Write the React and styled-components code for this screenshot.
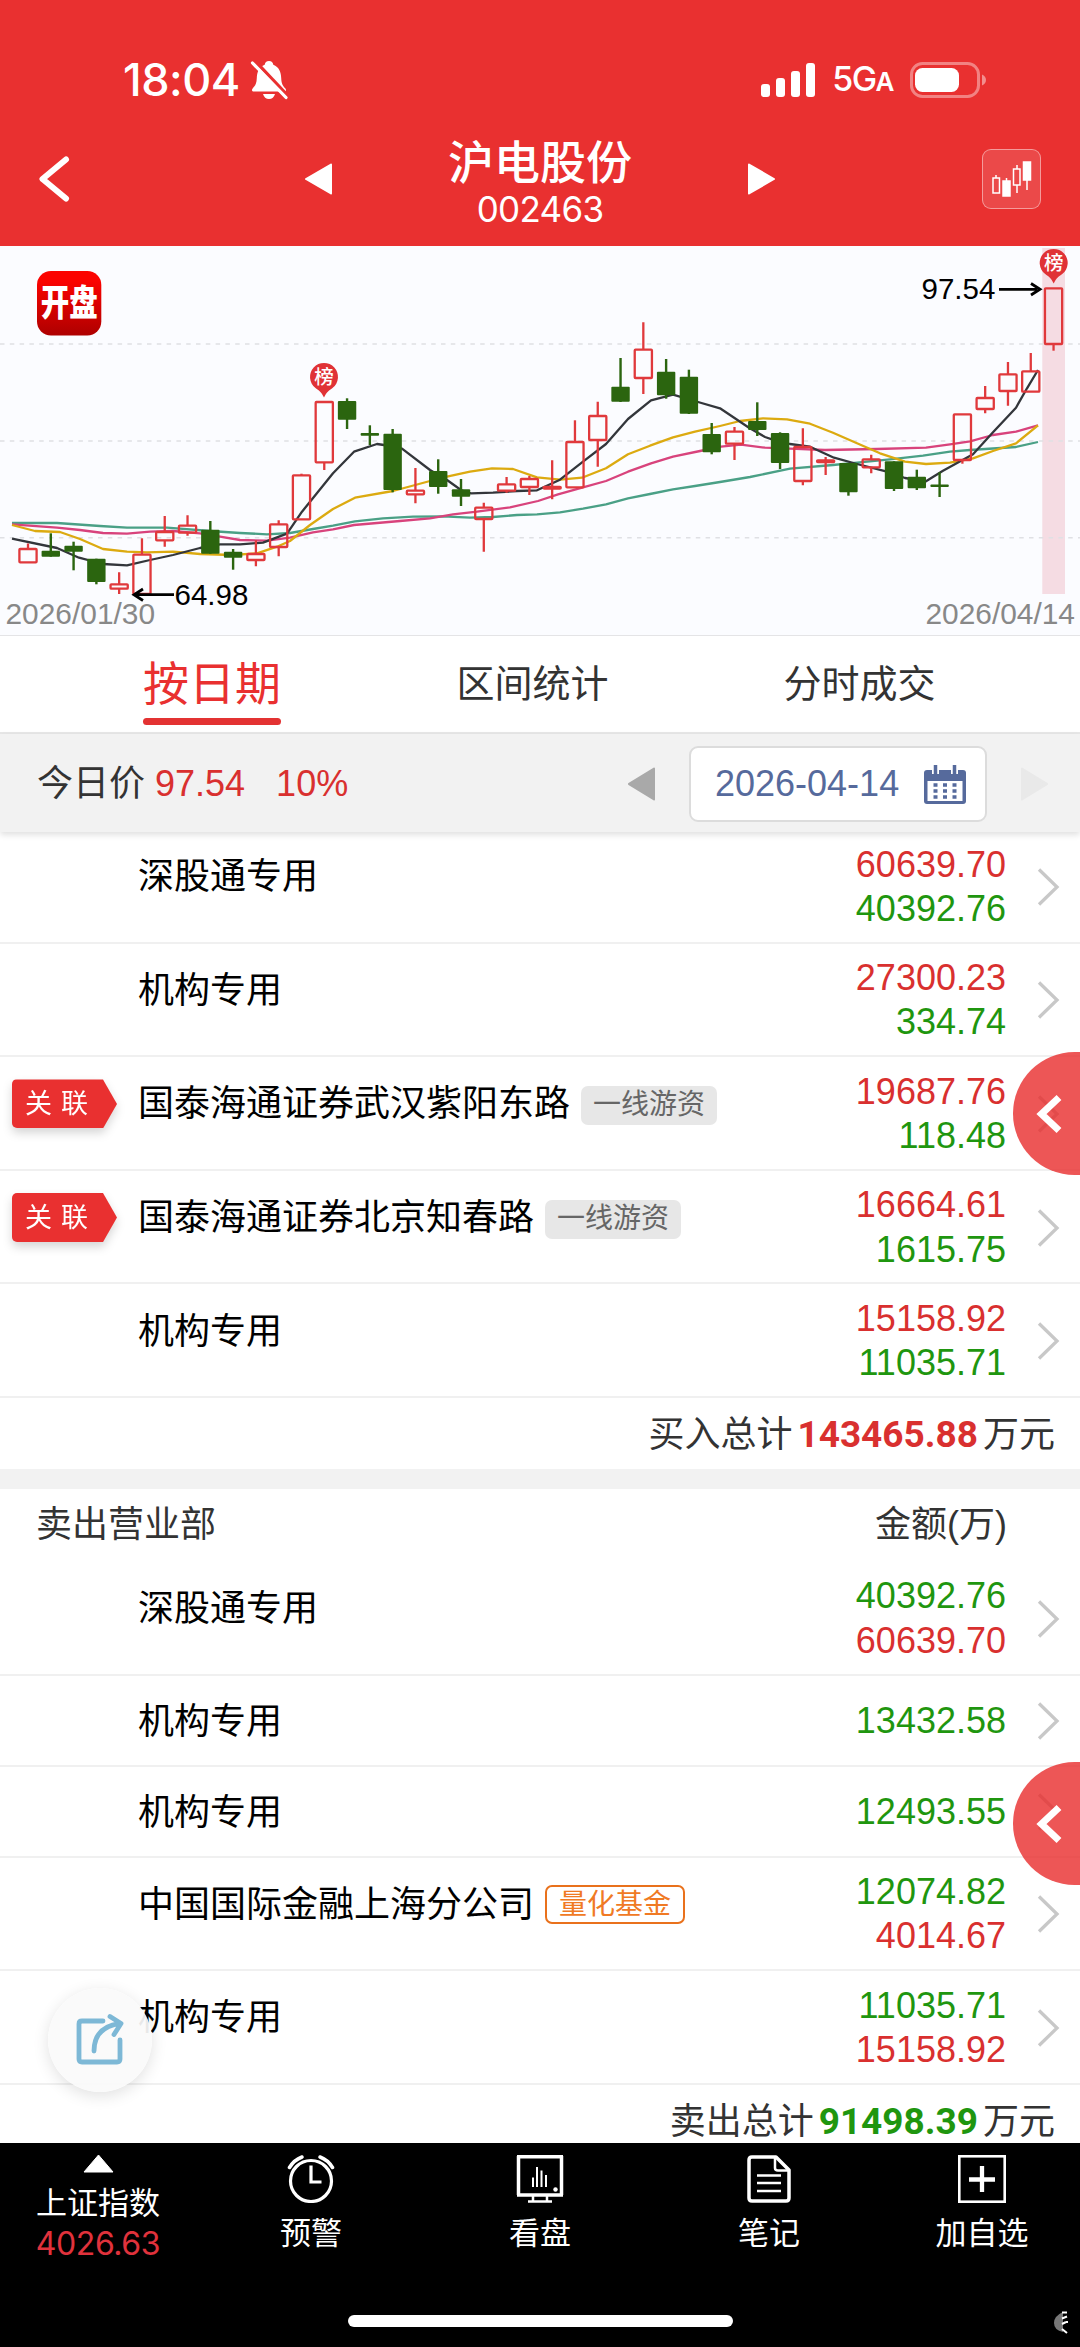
import styled, { createGlobalStyle, css } from 'styled-components';

const RED = '#e93030';
const UP = '#d9302f';
const DOWN = '#1f960f';

const GlobalStyle = createGlobalStyle`
  * {
    box-sizing: border-box;
  }
  body {
    margin: 0;
    background: #fff;
    font-family: 'Liberation Sans', 'Noto Sans CJK SC', sans-serif;
  }
  svg {
    display: block;
    flex-shrink: 0;
  }
`;

const Screen = styled.div`
    position: relative;
    display: flex;
    flex-direction: column;
    width: 1080px;
    height: 2347px;
    overflow: hidden;
    background: #fff;
`;

/* ---------- header ---------- */

const Header = styled.header`
    height: 246px;
    background: ${RED};
    color: #fff;
`;

const StatusBar = styled.div`
    display: flex;
    align-items: center;
    justify-content: space-between;
    height: 108px;
    padding: 52px 94px 0 123px;
`;

const StatusGroup = styled.div`
    display: flex;
    align-items: center;
    gap: ${({ $gap }) => $gap}px;
`;

const Clock = styled.span`
    font: 500 45px/56px Inter, sans-serif;
    letter-spacing: -0.5px;
`;

const Network = styled.span`
    font: 500 34px/56px Inter, sans-serif;
    letter-spacing: -1.5px;
    small {
        font-size: 26px;
        font-weight: 600;
    }
`;

const TitleBar = styled.div`
    display: grid;
    grid-template-columns: 305px 1fr 305px;
    align-items: center;
    height: 138px;
    padding-top: 3px;
`;

const BackCell = styled.div`
    padding-left: 36px;
`;

const ChartCell = styled.div`
    display: flex;
    justify-content: flex-end;
    padding-right: 39px;
`;

const StockSwitch = styled.div`
    display: flex;
    align-items: center;
    justify-content: space-between;
`;

const StockTitle = styled.div`
    display: flex;
    flex-direction: column;
    align-items: center;
    padding-top: 9px;
`;

const StockName = styled.h1`
    margin: 0;
    font-size: 46px;
    font-weight: 500;
    line-height: 51px;
`;

const StockCode = styled.span`
    font: 400 35px/40px Inter, sans-serif;
    letter-spacing: -0.7px;
`;

const ChartButton = styled.button`
    display: flex;
    align-items: center;
    justify-content: center;
    width: 59px;
    height: 60px;
    padding: 0;
    border: 1.5px solid rgba(255, 255, 255, 0.45);
    border-radius: 9px;
    background: rgba(255, 255, 255, 0.12);
`;

/* ---------- chart ---------- */

const ChartPanel = styled.section`
    height: 390px;
    background: #fbfcff;
    border-bottom: 1px solid #e4e4e6;
`;

/* ---------- tabs & date bar ---------- */

const Tabs = styled.nav`
    display: grid;
    grid-template-columns: 372px 269px 385px;
    justify-content: start;
    height: 98px;
    padding-left: 26px;
    border-bottom: 2px solid #e7e7e7;
`;

const Tab = styled.div`
    display: flex;
    flex-direction: column;
    align-items: center;
    padding-top: 18px;
    color: #333;
    font-size: 38px;
    line-height: 60px;

    ${({ $active }) => $active && css`
        color: ${RED};
        font-size: 46px;
        &::after {
            content: '';
            width: 138px;
            height: 7px;
            margin-top: 4px;
            border-radius: 4px;
            background: #e33232;
        }
    `}
`;

const DateBar = styled.div`
    position: relative;
    z-index: 2;
    display: flex;
    align-items: center;
    height: 98px;
    padding: 2px 32px 0 37px;
    background: #f2f2f2;
    box-shadow: 0 3px 6px rgba(0, 0, 0, 0.12);
    font-size: 36px;
    line-height: 50px;
    color: #333;
`;

const Price = styled.span`
    margin-left: ${({ $gap }) => $gap}px;
    color: ${UP};
`;

const DatePicker = styled.div`
    display: flex;
    align-items: center;
    gap: 34px;
    margin-left: auto;
`;

const DateBox = styled.div`
    display: flex;
    align-items: center;
    justify-content: space-between;
    width: 298px;
    height: 76px;
    padding: 0 19px 0 24px;
    border: 2px solid #dcdcdc;
    border-radius: 9px;
    background: #fff;
    color: #566a9c;
`;

/* ---------- list ---------- */

const Content = styled.main`
    flex: 1;
    min-height: 0;
    margin-top: -2px;
    overflow: hidden;
`;

const Row = styled.div`
    display: flex;
    align-items: center;
    height: ${({ $single }) => ($single ? 91 : 113.6)}px;
    padding: 2px 20px 0 0;
    border-bottom: 2px solid #f0f0f0;
`;

const RelationCell = styled.div`
    width: 138px;
    padding-left: 12px;
    margin-bottom: ${({ $single }) => ($single ? 0 : 20)}px;
`;

const RelationTag = styled.div`
    filter: drop-shadow(0 5px 5px rgba(0, 0, 0, 0.16));
    width: 105px;
    span {
        display: block;
        height: 49px;
        padding-left: 13px;
        border-radius: 5px 0 0 5px;
        background: ${RED};
        clip-path: polygon(0 0, 91px 0, 100% 50%, 91px 100%, 0 100%);
        color: #fff;
        font-size: 27px;
        line-height: 51px;
        letter-spacing: 9px;
        white-space: nowrap;
    }
`;

const Branch = styled.div`
    display: flex;
    align-items: center;
    flex: 1;
    gap: 11px;
    margin-bottom: ${({ $single }) => ($single ? -1 : 19)}px;
    color: #000;
    font-size: 36px;
    line-height: 50px;
    white-space: nowrap;
`;

const Label = styled.span`
    height: 39px;
    padding: 0 12px;
    border-radius: 7px;
    background: #e7e7e7;
    color: #666;
    font-size: 28px;
    line-height: 38px;
    margin-top: 2px;

    ${({ $outline }) => $outline && css`
        border: 2px solid #e9711c;
        background: #fff;
        color: #f07a24;
        line-height: 36px;
        margin-top: 0;
    `}
`;

const Amounts = styled.div`
    display: flex;
    flex-direction: column;
    align-items: flex-end;
    margin-right: 31px;
    font-size: 36px;
    line-height: 44.3px;
`;

const Amount = styled.span`
    color: ${({ $up }) => ($up ? UP : DOWN)};
`;

const Total = styled.div`
    display: flex;
    align-items: center;
    justify-content: flex-end;
    height: 71px;
    padding: 4px 25px 0 0;
    color: #333;
    font-size: 36px;
    line-height: 50px;
    b {
        margin: 0 5px;
        color: ${({ $up }) => ($up ? UP : DOWN)};
        font: 700 37px/50px Roboto, sans-serif;
    }
`;

const Divider = styled.div`
    height: 20px;
    background: #f2f2f2;
`;

const SellHeader = styled.div`
    display: flex;
    justify-content: space-between;
    align-items: center;
    height: 73px;
    padding: 0 73px 1px 36px;
    color: #333;
    font-size: 36px;
    line-height: 50px;
`;

/* ---------- floating buttons ---------- */

const SideHandle = styled.button`
    position: absolute;
    z-index: 3;
    top: ${({ $top }) => $top}px;
    right: 0;
    display: flex;
    align-items: center;
    width: 67px;
    height: 123px;
    padding: 0 0 0 21px;
    border: 0;
    border-radius: 62px 0 0 62px / 62px 0 0 62px;
    background: rgba(232, 44, 44, 0.8);
`;

const ShareButton = styled.button`
    position: absolute;
    z-index: 3;
    top: 1988px;
    left: 48px;
    display: flex;
    align-items: center;
    justify-content: center;
    width: 104px;
    height: 104px;
    padding: 0;
    border: 0;
    border-radius: 50%;
    background: rgba(250, 250, 250, 0.93);
    box-shadow: 0 4px 16px rgba(0, 0, 0, 0.12);
`;

/* ---------- bottom bar ---------- */

const BottomBar = styled.footer`
    position: relative;
    display: grid;
    grid-template-columns: 196px 230px 228px 230px 196px;
    align-content: start;
    height: 204px;
    background: #000;
    color: #fff;
    font-size: 31px;
    line-height: 40px;
`;

const NavItem = styled.div`
    display: flex;
    flex-direction: column;
    align-items: center;
    padding-top: 12px;
    gap: 11px;
`;

const IndexItem = styled(NavItem)`
    padding-top: 11px;
    gap: 0;
    svg {
        margin-bottom: 11px;
    }
`;

const IndexValue = styled.span`
    color: #e0323c;
    font: 400 32px/40px Inter, sans-serif;
    letter-spacing: -0.4px;
`;

const HomeIndicator = styled.div`
    position: absolute;
    left: 348px;
    bottom: 20px;
    width: 385px;
    height: 12px;
    border-radius: 6px;
    background: #fff;
`;

const CornerMark = styled.svg`
    position: absolute;
    right: 11px;
    bottom: 12px;
`;

/* ---------- data ---------- */

// [direction, high, body top, body bottom, low]
const candles = [
    ['u', 543.5, 549, 562.3, 562.3],
    ['d', 533.3, 550.7, 556.7, 556.7],
    ['d', 541.7, 545.7, 551.7, 570.3],
    ['d', 558.7, 558.7, 582, 584.3],
    ['u', 572.3, 584.3, 588.7, 594],
    ['u', 538.3, 554.7, 594, 594],
    ['u', 516, 532, 540.3, 546.7],
    ['u', 515.3, 525.7, 532.7, 535.7],
    ['d', 521, 529.7, 553.7, 553.7],
    ['d', 549, 551.7, 557.7, 569.7],
    ['u', 540.3, 554, 560, 566.3],
    ['u', 520.3, 524.3, 547, 556.3],
    ['u', 473.7, 475.3, 519.3, 519.3],
    ['u', 402, 402, 462.3, 470],
    ['d', 398.3, 401, 419.7, 429],
    ['d', 425.3, 434.3, 434.3, 445],
    ['d', 429, 433.7, 490, 492.3],
    ['u', 468, 490.7, 494.3, 503.3],
    ['d', 459.3, 471, 487, 493.7],
    ['d', 479, 489.3, 496.7, 506],
    ['u', 502.7, 507.7, 519, 551.7],
    ['u', 477, 484.3, 490.7, 492.7],
    ['u', 476, 479, 487, 495],
    ['u', 460.3, 487, 488.5, 499.3],
    ['u', 420.3, 442, 487.3, 487.3],
    ['u', 401.7, 416, 440, 466.7],
    ['d', 358, 386.7, 401.7, 402],
    ['u', 322.3, 349.7, 378, 394],
    ['d', 359, 371.7, 395.3, 398.7],
    ['d', 369.7, 376.7, 413.7, 414],
    ['d', 423, 434, 452.3, 454.3],
    ['u', 427, 431.7, 443.7, 460],
    ['d', 402.3, 421, 430, 436],
    ['d', 432.3, 433, 463, 469],
    ['u', 428.3, 447, 481, 485.3],
    ['u', 457, 460.3, 462, 475],
    ['d', 463, 463, 492.3, 495.7],
    ['u', 454.7, 459.3, 467.3, 473.3],
    ['d', 461.3, 461.3, 489, 491],
    ['d', 469.7, 476.7, 488.3, 490],
    ['d', 472.3, 485.7, 485.7, 497],
    ['u', 414.3, 414.3, 460, 463.7],
    ['u', 386, 398, 409, 413.3],
    ['u', 362, 374.3, 391, 405.7],
    ['u', 353, 371.3, 391.7, 391.7],
    ['u', 288.3, 288.3, 344, 350.7],
];

const averages = [
    {
        color: '#4aa086',
        points: '12,523 57,523 100,526 127,527.7 167,527.7 210,531 240,533 267,534.3 290,533 313,529 333,525.7 355,521.3 383,518.3 413,516.7 443,516.3 470,517.7 493,517 517,515 537,514.3 560,512.3 583,508.7 606,504.3 628,498.3 650,494 673,489.3 695,486 720,482 750,477 790,468.7 833,465 857,462.7 890,459.3 923,455.7 950,451.7 970,450 1016,447 1038,442',
    },
    {
        color: '#d8437c',
        points: '12,524.3 57,527.7 80,530 103,533 127,533.7 150,531.7 173,531 200,533.3 220,536.7 240,540 267,540.7 290,537.7 313,532.3 333,529.3 354,525 400,521 430,518.3 453,514.3 477,511.7 510,507.3 538,501 558,494.3 583,487.3 606,481 628,471.7 651,463.3 673,456.7 700,451 721,446.7 741,444.7 765,447.7 790,448.7 825,450 877,449 926,447.7 950,444.3 970,441.3 993,435 1016,431.7 1038,425.3',
    },
    {
        color: '#dcaa10',
        points: '12,525 35,531 60,532 80,539 103,549 127,551.7 147,552.3 173,551.7 200,554 233,555 257,553.3 277,546.7 290,541 310,525 333,509 355,497.7 393,491 430,481 447,476.7 470,471.7 492,468.3 513,469 537,477.3 560,479.7 582,477.7 606,468.3 628,454.3 650,445.7 673,437.3 695,431.7 720,426 740,421 763,418.3 787,419.3 810,423.7 833,432.7 857,443.3 880,453.3 905,461.7 926,464 950,462.7 973,458.3 993,451 1016,443.3 1038,425.3',
    },
    {
        color: '#33363b',
        points: '12,538.7 57,548 79,557.7 103,564 127,565.3 150,560 173,555 200,548 220,544.3 240,544.3 263,542.7 287,533.7 302,511.7 333,473.3 354,451.7 377,444 384,445 402,448.7 430,470 447,480 462,490.7 471,493.3 493,492.7 517,491 537,490.3 560,479.7 583,461.7 606,444 628,419 651,400.3 673,394.7 698,402 720,408.3 749,427.7 765,437 772,439.3 790,444 810,446.7 834,457.7 857,464 887,471.7 905,478 926,481.3 943,470.7 973,454.3 993,432.3 1016,407.7 1027,388.3 1038,370',
    },
];

const buyRows = [
    { name: '深股通专用', up: '60639.70', down: '40392.76' },
    { name: '机构专用', up: '27300.23', down: '334.74' },
    { name: '国泰海通证券武汉紫阳东路', label: '一线游资', related: true, up: '19687.76', down: '118.48' },
    { name: '国泰海通证券北京知春路', label: '一线游资', related: true, up: '16664.61', down: '1615.75' },
    { name: '机构专用', up: '15158.92', down: '11035.71' },
];

const sellRows = [
    { name: '深股通专用', down: '40392.76', up: '60639.70' },
    { name: '机构专用', down: '13432.58' },
    { name: '机构专用', down: '12493.55' },
    { name: '中国国际金融上海分公司', label: '量化基金', outline: true, down: '12074.82', up: '4014.67' },
    { name: '机构专用', down: '11035.71', up: '15158.92' },
];

/* ---------- icons ---------- */

const BellOff = () => (
    <svg width="38" height="40" viewBox="0 0 38 40">
        <path d="M19 1c2.600 0 4 1.500 4.300 3.800C29 7 31 12 31.200 18c.2 6 1.800 8 4 10.200 1.500 1.600.8 3.300-1.200 3.300H4c-2 0-2.700-1.700-1.200-3.300C5 26 6.600 24 6.800 18 7 12 9 7 14.700 4.800 15 2.500 16.400 1 19 1Z" fill="#fff" />
        <path d="M13 34h12c-.8 3-3 5-6 5s-5.200-2-6-5Z" fill="#fff" />
        <path d="M5 1l33 35" stroke={RED} strokeWidth="3.500" />
        <path d="M2.500 3L36 37.500" stroke="#fff" strokeWidth="3.200" strokeLinecap="round" />
    </svg>
);

const Signal = () => (
    <svg width="54" height="36" viewBox="0 0 54 36" fill="#fff">
        <rect x="0" y="22" width="9" height="13" rx="3" />
        <rect x="15" y="16" width="9" height="19" rx="3" />
        <rect x="30" y="9" width="9" height="26" rx="3" />
        <rect x="45" y="1" width="9" height="34" rx="3" />
    </svg>
);

const Battery = () => (
    <svg width="76" height="36" viewBox="0 0 76 36">
        <rect x="1.500" y="1.500" width="67" height="33" rx="11" fill="none" stroke="#fff" strokeOpacity=".4" strokeWidth="3" />
        <rect x="5" y="6" width="44" height="24" rx="7.500" fill="#fff" />
        <path d="M72 12.500c2.500 1 4 3 4 5.500s-1.500 4.500-4 5.500Z" fill="#fff" fillOpacity=".45" />
    </svg>
);

const Arrow = ({ right, color, height = 32 }) => (
    <svg width="27" height={height} viewBox="0 0 27 32" preserveAspectRatio="none">
        <path d={right ? 'M1 1.500L26 16L1 30.500Z' : 'M26 1.500L1 16L26 30.500Z'} fill={color} stroke={color} strokeWidth="2" strokeLinejoin="round" />
    </svg>
);

const Chevron = () => (
    <svg width="23" height="40" viewBox="0 0 23 40">
        <path d="M2 2.500L20 20L2 37.500" fill="none" stroke="#c8c8c8" strokeWidth="3.300" />
    </svg>
);

const Calendar = () => (
    <svg width="42" height="41" viewBox="0 0 42 41">
        <path d="M3 6h36q3 0 3 3v28q0 3-3 3H3q-3 0-3-3V9q0-3 3-3Z" fill="#566a9c" />
        <path d="M3.500 17h35v20h-35Z" fill="#fff" />
        <path d="M11.500 0v10M30.500 0v10" stroke="#fff" strokeWidth="7" />
        <path d="M11.500 1v9M30.500 1v9" stroke="#566a9c" strokeWidth="3.500" />
        <path d="M9.500 21h4M19 21h4M28.500 21h4M9.500 27h4M19 27h4M28.500 27h4M9.500 33h4M19 33h4M28.500 33h4" stroke="#566a9c" strokeWidth="3.500" />
    </svg>
);

const Pin = ({ x, y }) => (
    <g transform={`translate(${x} ${y})`}>
        <path d="M0 20.500C-3 14.500-5 13.500-8.500 11A14 14 0 1 1 8.500 11C5 13.500 3 14.500 0 20.500Z" fill="#e03236" />
        <text x="0" y="7" textAnchor="middle" fontSize="19.500" fontWeight="500" fill="#fff" fontFamily="Noto Sans CJK SC">榜</text>
    </g>
);

const Candle = ({ index, data: [dir, high, top, bottom, low] }) => {
    const x = 28 + index * 22.79;
    const color = dir === 'u' ? '#e0393c' : '#2b650f';
    if (dir === 'd') {
        const h = Math.max(bottom - top, 2.700);
        return (
            <g fill={color}>
                <rect x={x - 1.200} y={high} width="2.400" height={low - high} />
                <rect x={x - 9.200} y={h === 2.700 ? top - 1.300 : top} width="18.400" height={h} rx="1" />
            </g>
        );
    }
    return (
        <g fill="none" stroke={color} strokeWidth="2.300">
            <path d={`M${x} ${high}V${top}M${x} ${bottom}V${low}`} />
            <rect x={x - 8.600} y={top} width="17.200" height={bottom - top} rx=".8" />
        </g>
    );
};

const KLineChart = () => (
    <svg width="1080" height="389" viewBox="0 246 1080 389" fontFamily="Liberation Sans">
        <defs>
            <linearGradient id="logo" x1="0" y1="0" x2="0" y2="1">
                <stop offset="0.150" stopColor="#fb0300" />
                <stop offset="1" stopColor="#ae0000" />
            </linearGradient>
        </defs>
        <rect x="1042.300" y="248" width="22.700" height="346" fill="#f5dce3" />
        {[344, 441, 537.7].map((y) => (
            <path key={y} d={`M0 ${y}H1080`} stroke="#dfe0e4" strokeWidth="1.500" strokeDasharray="4.500 5.300" />
        ))}
        {averages.map(({ color, points }) => (
            <polyline key={color} points={points} fill="none" stroke={color} strokeWidth="2.300" strokeLinejoin="round" />
        ))}
        {candles.map((data, index) => (
            <Candle key={index} index={index} data={data} />
        ))}
        <Pin x={324} y={377} />
        <Pin x={1053.700} y={263} />

        <path d="M174 594.700H137M143 589L134 594.700L143 600.500" fill="none" stroke="#000" strokeWidth="2.800" />
        <text x="174.500" y="605" fontSize="29.500" fill="#000">64.98</text>
        <path d="M999 289.300H1037M1031 283.500L1040 289.300L1031 295" fill="none" stroke="#000" strokeWidth="2.800" />
        <text x="921.500" y="299.300" fontSize="29.500" fill="#000">97.54</text>
        <text x="5.500" y="624" fontSize="29.900" fill="#888">2026/01/30</text>
        <text x="1075" y="624" textAnchor="end" fontSize="29.900" fill="#888">2026/04/14</text>

        <rect x="37" y="271" width="64.300" height="64.500" rx="14" fill="url(#logo)" />
        <text transform="translate(69.200 315.500) scale(1 1.280)" textAnchor="middle" fontSize="28.500" fontWeight="900" fill="#fff" fontFamily="Noto Sans CJK SC">开盘</text>
    </svg>
);

const AlarmIcon = () => (
    <svg width="48" height="48" viewBox="0 0 48 48" fill="none" stroke="#fff">
        <circle cx="24" cy="26" r="20.500" strokeWidth="3.200" />
        <path d="M2.500 12.500Q7 5 15 2M45.500 12.500Q41 5 33 2" strokeWidth="3.500" strokeLinecap="round" />
        <path d="M24 10.500V27H34.500" strokeWidth="3.200" />
    </svg>
);

const BoardIcon = () => (
    <svg width="48" height="48" viewBox="0 0 48 48" fill="none" stroke="#fff">
        <path d="M1 1.800H47M2.500 1V40M45.500 1V40M1 40H47" strokeWidth="3.500" />
        <path d="M17 41v5M31 41v5M12 46.500H36" strokeWidth="2.500" />
        <path d="M17 22.500V32M21 12V32M25.500 15.500V32M30 20V32" strokeWidth="2" />
        <circle cx="39.500" cy="34.500" r="2.200" fill="#fff" stroke="none" />
    </svg>
);

const NoteIcon = () => (
    <svg width="44" height="48" viewBox="0 0 44 48" fill="none" stroke="#fff" strokeLinejoin="round">
        <path d="M5 2H29L42 15V43Q42 46 39 46H5Q2 46 2 43V5Q2 2 5 2Z" strokeWidth="3.500" />
        <path d="M28 3V13Q28 15.500 31 15.500H41" strokeWidth="2.500" />
        <path d="M10 20.500H34M10 28H34M10 36H34" strokeWidth="2.500" />
    </svg>
);

const AddIcon = () => (
    <svg width="48" height="48" viewBox="0 0 48 48" fill="none" stroke="#fff">
        <rect x="1.300" y="1.300" width="45.400" height="45.400" strokeWidth="2.600" />
        <path d="M24 11V37M11 24.500H37" strokeWidth="4.300" />
    </svg>
);

const navItems = [
    { label: '预警', Icon: AlarmIcon },
    { label: '看盘', Icon: BoardIcon },
    { label: '笔记', Icon: NoteIcon },
    { label: '加自选', Icon: AddIcon },
];

const TradeRow = ({ row, sell }) => {
    const single = !row.up || !row.down;
    const order = sell ? ['down', 'up'] : ['up', 'down'];
    return (
        <Row $single={single}>
            <RelationCell $single={single}>
                {row.related && <RelationTag><span>关联</span></RelationTag>}
            </RelationCell>
            <Branch $single={single}>
                {row.name}
                {row.label && <Label $outline={row.outline}>{row.label}</Label>}
            </Branch>
            <Amounts>
                {order.filter((key) => row[key]).map((key) => (
                    <Amount key={key} $up={key === 'up'}>{row[key]}</Amount>
                ))}
            </Amounts>
            <Chevron />
        </Row>
    );
};

const HandleIcon = () => (
    <svg width="30" height="42" viewBox="0 0 30 42">
        <path d="M25 4.500L7.500 21L25 37.500" fill="none" stroke="#fff" strokeWidth="7" />
    </svg>
);

const App = () => {
    return (
        <Screen>
            <GlobalStyle />
            <Header>
                <StatusBar>
                    <StatusGroup $gap={10}>
                        <Clock>18:04</Clock>
                        <BellOff />
                    </StatusGroup>
                    <StatusGroup $gap={17}>
                        <Signal />
                        <Network>5G<small>A</small></Network>
                        <Battery />
                    </StatusGroup>
                </StatusBar>
                <TitleBar>
                    <BackCell>
                        <svg width="36" height="48" viewBox="0 0 36 48">
                            <path d="M30 4.500L6.500 24L30 43.500" fill="none" stroke="#fff" strokeWidth="6" strokeLinecap="round" strokeLinejoin="round" />
                        </svg>
                    </BackCell>
                    <StockSwitch>
                        <Arrow color="#fff" />
                        <StockTitle>
                            <StockName>沪电股份</StockName>
                            <StockCode>002463</StockCode>
                        </StockTitle>
                        <Arrow right color="#fff" />
                    </StockSwitch>
                    <ChartCell>
                        <ChartButton>
                            <svg width="42" height="38" viewBox="0 0 42 38" fill="none" stroke="#fff" strokeWidth="1.500">
                                <path d="M5 15v3M2 18h6.500v15H2ZM26 5v4M26 25v8M22.500 9h6.500v16h-6.500Z" />
                                <path d="M15.500 18v4M36 20v10" />
                                <path d="M12 21h7v15h-7ZM32.500 2h7v18h-7Z" fill="#fff" />
                            </svg>
                        </ChartButton>
                    </ChartCell>
                </TitleBar>
            </Header>

            <ChartPanel>
                <KLineChart />
            </ChartPanel>

            <Tabs>
                <Tab $active>按日期</Tab>
                <Tab>区间统计</Tab>
                <Tab>分时成交</Tab>
            </Tabs>

            <DateBar>
                今日价
                <Price $gap={10}>97.54</Price>
                <Price $gap={31}>10%</Price>
                <DatePicker>
                    <Arrow color="#a9a9a9" height={34} />
                    <DateBox>
                        2026-04-14
                        <Calendar />
                    </DateBox>
                    <Arrow right color="#e9e9e9" height={34} />
                </DatePicker>
            </DateBar>

            <Content>
                {buyRows.map((row, index) => (
                    <TradeRow key={index} row={row} />
                ))}
                <Total $up>买入总计<b>143465.88</b>万元</Total>
                <Divider />
                <SellHeader>
                    <span>卖出营业部</span>
                    <span>金额(万)</span>
                </SellHeader>
                {sellRows.map((row, index) => (
                    <TradeRow key={index} row={row} sell />
                ))}
                <Total>卖出总计<b>91498.39</b>万元</Total>
            </Content>

            <SideHandle $top={1052}><HandleIcon /></SideHandle>
            <SideHandle $top={1762}><HandleIcon /></SideHandle>
            <ShareButton>
                <svg width="50" height="54" viewBox="0 0 50 54" fill="none" stroke="#7db8d6" strokeWidth="4.800" strokeLinecap="round" strokeLinejoin="round">
                    <path d="M28 8H7Q4 8 4 11V46Q4 49 7 49H42Q45 49 45 46V27" />
                    <path d="M19 38Q19 14 45 10.500M35 3.500L46 10.500L39 21.500" />
                </svg>
            </ShareButton>

            <BottomBar>
                <IndexItem>
                    <svg width="31" height="19" viewBox="0 0 31 19">
                        <path d="M15.500 1L30 18H1Z" fill="#fff" stroke="#fff" strokeLinejoin="round" />
                    </svg>
                    上证指数
                    <IndexValue>4026.63</IndexValue>
                </IndexItem>
                {navItems.map(({ label, Icon }) => (
                    <NavItem key={label}>
                        <Icon />
                        {label}
                    </NavItem>
                ))}
                <HomeIndicator />
                <CornerMark width="16" height="24" viewBox="0 0 16 24">
                    <path d="M10 1Q1 5 1 12T10 21Z" fill="#777" />
                    <path d="M9 1.500h5M9 7.500l5-2M9 13l4-2M14 10v2M9 18l5 4" stroke="#fff" strokeWidth="2" fill="none" />
                </CornerMark>
            </BottomBar>
        </Screen>
    );
};

export default App;
